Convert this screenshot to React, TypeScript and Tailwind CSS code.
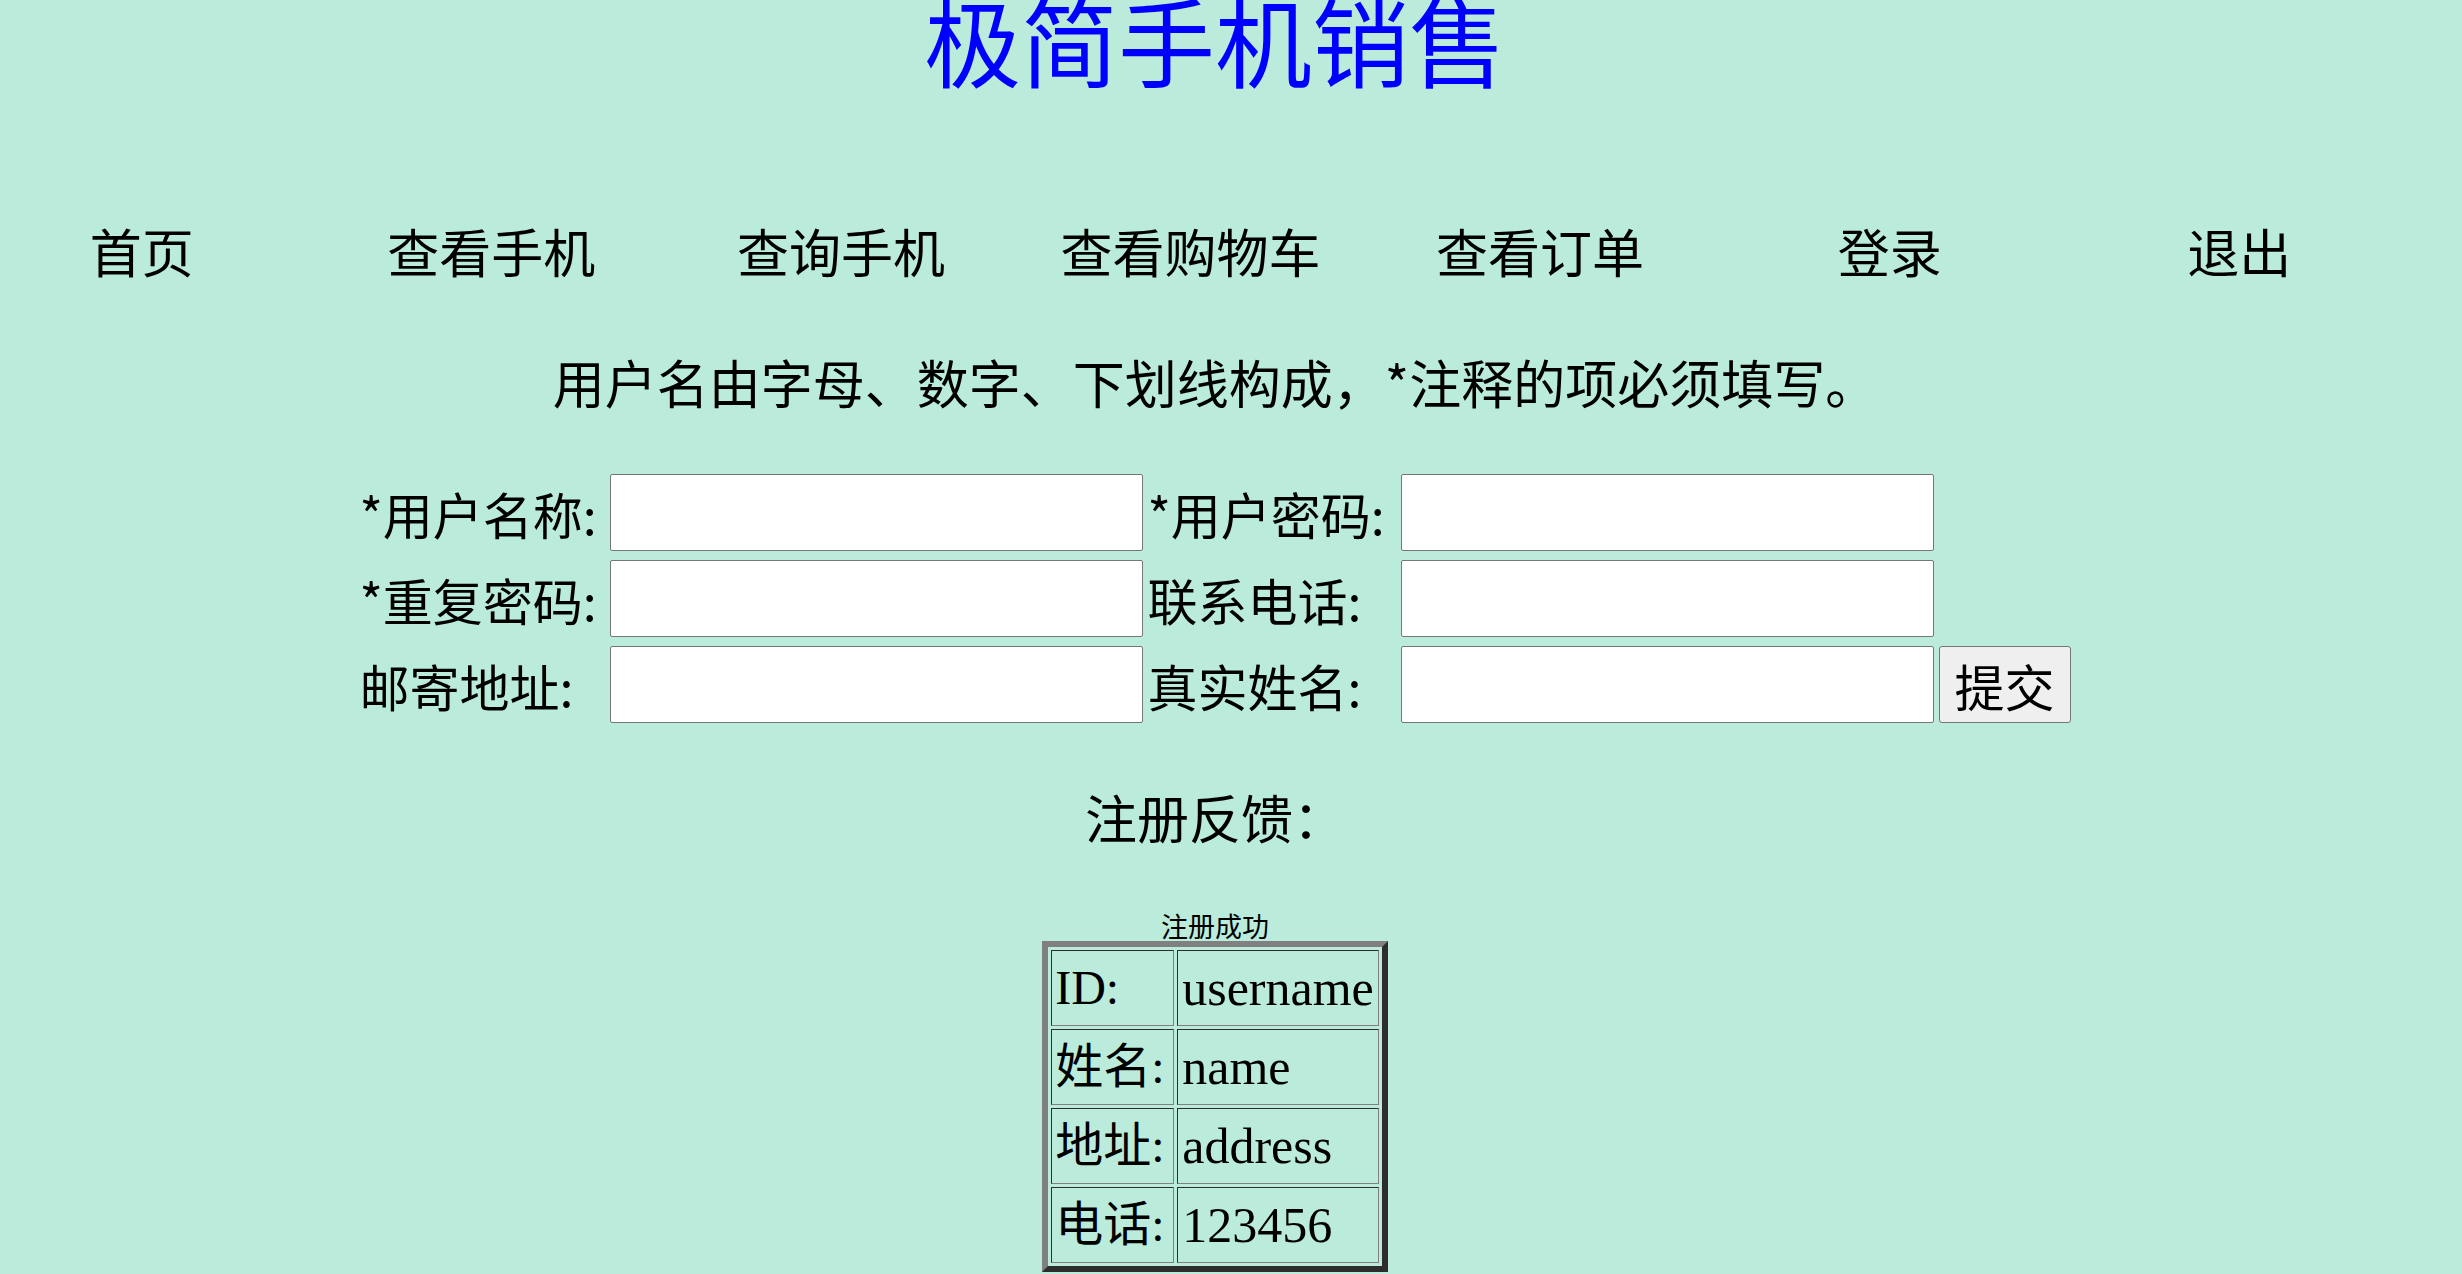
import React from 'react';

const cjk = { fontFamily: '"Noto Sans CJK SC", sans-serif' };
const mixed = { fontFamily: '"Liberation Serif", "Noto Sans CJK SC", serif' };

const navItems = ['首页', '查看手机', '查询手机', '查看购物车', '查看订单', '登录', '退出'];

const formRows = [
  ['*用户名称:', '*用户密码:'],
  ['*重复密码:', '联系电话:'],
  ['邮寄地址:', '真实姓名:'],
];

const result = [
  ['ID:', 'username'],
  ['姓名:', 'name'],
  ['地址:', 'address'],
  ['电话:', '123456'],
];

const Field = () => (
  <input
    type="text"
    className="h-[77px] w-[533px] rounded-[2px] border border-[#767676] bg-white px-1 outline-none"
  />
);

const App = () => {
  return (
    <div className="h-[1274px] w-full overflow-hidden bg-[#bbebdb] text-black" style={cjk}>
      <div className="w-[2430px]">
        {/* title */}
        <div className="flex h-[74px] items-center justify-center">
          <h1 className="text-[97px] leading-none font-normal whitespace-nowrap text-[#0000ff]">极简手机销售</h1>
        </div>

        {/* nav */}
        <div className="mt-[147px] grid h-[60px] w-[2447px] grid-cols-7 items-center">
          {navItems.map((item) => (
            <a key={item} className="cursor-pointer pr-[66px] text-center text-[52px] leading-none whitespace-nowrap">
              {item}
            </a>
          ))}
        </div>

        <div className="mt-[71px] flex h-[60px] items-center justify-center text-[52px] leading-none whitespace-nowrap">
          用户名由字母、数字、下划线构成，*注释的项必须填写。
        </div>

        {/* register form */}
        <form className="mt-[62px] flex justify-center">
          <div className="grid grid-cols-[245px_533px_248px_533px_132px] gap-x-[5px] gap-y-[9px]">
            {formRows.map(([left, right], i) => (
              <React.Fragment key={left}>
                <label className="flex h-[77px] items-center text-[50px] leading-none whitespace-nowrap">{left}</label>
                <Field />
                <label className="flex h-[77px] items-center text-[50px] leading-none whitespace-nowrap">{right}</label>
                <Field />
                {i === 2 ? (
                  <button
                    type="button"
                    className="h-[77px] w-[132px] rounded-[3px] border border-[#767676] bg-[#efefef] text-[50px] leading-none"
                  >
                    提交
                  </button>
                ) : (
                  <div />
                )}
              </React.Fragment>
            ))}
          </div>
        </form>

        <div className="mt-[64px] flex h-[60px] items-center justify-center text-[52px] leading-none whitespace-nowrap">
          注册反馈：
        </div>

        <div className="mt-[62px] flex h-[32px] items-center justify-center text-[27px] leading-none">
          注册成功
        </div>

        <div className="flex justify-center">
          <table
            className="border-separate border-spacing-[3px] border-[6px] border-t-[#808080] border-l-[#808080] border-r-[#2d2d2d] border-b-[#2d2d2d]"
            style={mixed}
          >
            <tbody>
              {result.map(([k, v]) => (
                <tr key={k}>
                  <td className="h-[76px] w-[123px] border border-t-[#2d2d2d] border-l-[#2d2d2d] border-r-[#808080] border-b-[#808080] px-[3px] text-left align-middle text-[48px] leading-none whitespace-nowrap">
                    {k}
                  </td>
                  <td className="h-[76px] w-[201px] border border-t-[#2d2d2d] border-l-[#2d2d2d] border-r-[#808080] border-b-[#808080] px-[4px] text-left align-middle text-[50px] leading-none whitespace-nowrap">
                    {v}
                  </td>
                </tr>
              ))}
            </tbody>
          </table>
        </div>
      </div>
    </div>
  );
};

export default App;
